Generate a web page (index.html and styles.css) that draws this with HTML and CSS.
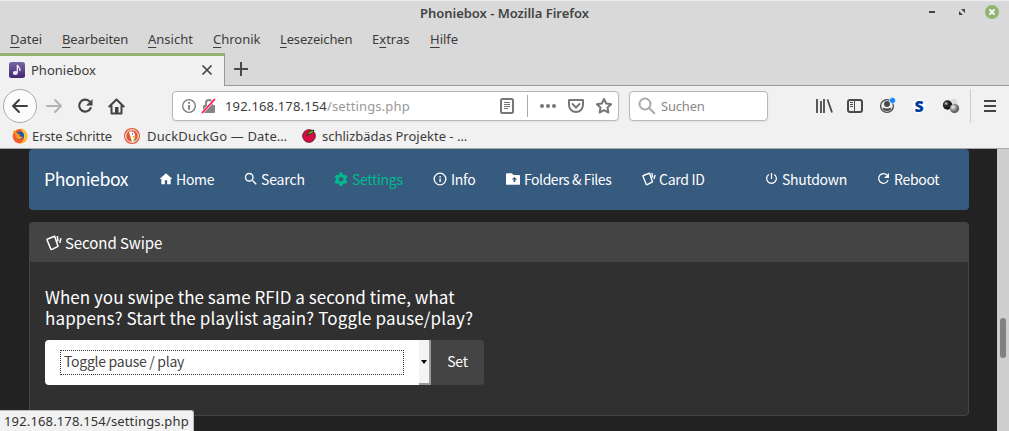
FILE: index.html
```html
<!DOCTYPE html>
<html lang="de">
<head>
<meta charset="utf-8">
<title>Phoniebox</title>
<link rel="stylesheet" href="styles.css">
</head>
<body>
<div class="window">
  <header class="titlebar">
    <span class="title">Phoniebox - Mozilla Firefox</span>
    <svg class="controls" width="82" height="26" viewBox="0 0 82 26">
      <path d="M2 12h6" stroke="#444" stroke-width="2"/>
      <path d="M34 9h4v4zM32 11v4h4z" fill="#444"/>
      <circle cx="65" cy="12" r="7" fill="#92b372"/>
      <path d="M62.4 9.4l5.2 5.2M67.600 9.4l-5.200 5.200" stroke="#fff" stroke-width="1.800"/>
    </svg>
  </header>
  <nav class="menubar">
    <span class="m-datei"><u>D</u>atei</span>
    <span class="m-bearbeiten"><u>B</u>earbeiten</span>
    <span class="m-ansicht"><u>A</u>nsicht</span>
    <span class="m-chronik"><u>C</u>hronik</span>
    <span class="m-lesezeichen"><u>L</u>esezeichen</span>
    <span class="m-extras">E<u>x</u>tras</span>
    <span class="m-hilfe"><u>H</u>ilfe</span>
  </nav>
  <div class="tabs">
    <div class="tab">
      <svg width="16" height="16" viewBox="0 0 16 16">
        <defs><linearGradient id="purple" x2="0" y2="1"><stop stop-color="#7966a4"/><stop offset="1" stop-color="#43256f"/></linearGradient></defs>
        <rect width="16" height="16" rx="2.500" fill="url(#purple)"/>
        <ellipse cx="6.300" cy="11" rx="2.500" ry="2" fill="#eee8fa"/>
        <path d="M8.300 11V3c.4 2 3.700 2.500 2.500 6" fill="none" stroke="#eee8fa" stroke-width="1.300"/>
      </svg>
      <span class="tab-title">Phoniebox</span>
      <svg class="tab-close" width="12" height="12" viewBox="0 0 12 12"><path d="M1.500 1.500l9 9M10.500 1.500l-9 9" stroke="#444" stroke-width="1.700"/></svg>
    </div>
    <div class="tab-rest"><svg width="14" height="14" viewBox="0 0 14 14"><path d="M7 0v14M0 7h14" stroke="#4a4a4a" stroke-width="2"/></svg></div>
  </div>
  <div class="toolbar">
    <div class="back"><svg width="18" height="16" viewBox="0 0 18 16" fill="none" stroke="#3f3f3f" stroke-width="2" stroke-linecap="round" stroke-linejoin="round"><path d="M16 8H2M8 2L2 8l6 6"/></svg></div>
    <svg class="forward" width="18" height="16" viewBox="0 0 18 16" fill="none" stroke="#b3b3b3" stroke-width="2" stroke-linecap="round" stroke-linejoin="round"><path d="M2 8h14M10 2l6 6-6 6"/></svg>
    <svg class="reload" width="16" height="16" viewBox="0 0 16 16"><path d="M12.300 3.200A6 6 0 1 0 13.700 10" fill="none" stroke="#444" stroke-width="2.100" stroke-linecap="round"/><path d="M15.500 1v6.500H9z" fill="#444"/></svg>
    <svg class="home" width="17" height="17" viewBox="0 0 17 17"><path d="M1.300 8.500L8.500 1.500l7.200 7M3.500 8v7.500h10V8" fill="none" stroke="#444" stroke-width="2" stroke-linejoin="round" stroke-linecap="round"/><path d="M7 9h3.500v6H7z" fill="#444"/></svg>
    <div class="urlbar">
      <svg width="14" height="14" viewBox="0 0 14 14"><circle cx="7" cy="7" r="6.300" fill="none" stroke="#777" stroke-width="1.300"/><path d="M7 6v4.800M7 3v1.800" stroke="#777" stroke-width="1.800"/></svg>
      <svg class="lock" width="16" height="16" viewBox="0 0 16 16"><path d="M5 8V5a3 3 0 0 1 6 0v3" fill="none" stroke="#858585" stroke-width="2"/><rect x="2" y="7" width="12" height="8" rx="1" fill="#858585"/><path d="M1 15L14 1" stroke="#fff" stroke-width="2.600"/><path d="M1 15L14 1" stroke="#ff174f" stroke-width="1.800"/></svg>
      <span class="url">192.168.178.154<i>/settings.php</i></span>
      <svg class="url-tools" width="116" height="22" viewBox="0 0 116 22" fill="none" stroke="#777">
        <rect x="2" y="4" width="12" height="14" rx="1.500" stroke-width="2"/><path d="M5 7.500h6M5 9.500h6M5 11.500h6M5 13.500h4"/>
        <path d="M28.500 0v22" stroke="#aaa"/>
        <g fill="#777" stroke="none"><circle cx="43" cy="11" r="2"/><circle cx="49" cy="11" r="2"/><circle cx="55" cy="11" r="2"/></g>
        <path d="M70 5h14v5a7 7 0 0 1-14 0z" stroke-width="2" stroke-linejoin="round"/><path d="M73.500 9l3.500 3.500L80.500 9" stroke-width="2" stroke-linecap="round"/>
        <path d="M105 4l2.200 4.500 4.900.7-3.600 3.400.9 4.900-4.400-2.400-4.400 2.400.9-4.900L97.900 9.200l4.900-.7z" stroke-width="2" stroke-linejoin="round"/>
      </svg>
    </div>
    <div class="search">
      <svg width="18" height="18" viewBox="0 0 18 18" fill="none" stroke="#aaa" stroke-width="2" stroke-linecap="round"><circle cx="7" cy="7" r="5.500"/><path d="M11.300 11.300l5 5"/></svg>
      <span>Suchen</span>
    </div>
    <svg class="actions" width="194" height="34" viewBox="0 0 194 34">
      <path d="M2 10v14M6 12v12M9 10v14M12.500 10.500l4.500 13" stroke="#4a4a4a" stroke-width="1.800" fill="none"/>
      <rect x="33" y="11" width="14" height="12" rx="2" fill="none" stroke="#4a4a4a" stroke-width="2"/><path d="M39.500 11v12M35 13.500h3M35 15.500h3M35 17.500h3" stroke="#4a4a4a"/>
      <circle cx="72" cy="17" r="6.400" fill="none" stroke="#4a4a4a" stroke-width="1.300"/><circle cx="72" cy="15" r="3" fill="#4a4a4a"/><path d="M67.500 18.500q4.500 2 9 0-.5 3.500-4.500 3.500t-4.500-3.500" fill="#4a4a4a"/><circle cx="77.500" cy="11.500" r="3" fill="#0a84ff" stroke="#f1f1f1" stroke-width=".7"/>
      <circle cx="104" cy="17" r="7" fill="#fff"/><text x="104" y="22.500" class="s-logo" text-anchor="middle">S</text>
      <defs><radialGradient id="black" cx=".35" cy=".35" r=".6"><stop stop-color="#ddd"/><stop offset=".35" stop-color="#333"/><stop offset="1" stop-color="#111"/></radialGradient><radialGradient id="grey" cx=".35" cy=".35"><stop stop-color="#eee"/><stop offset="1" stop-color="#666"/></radialGradient></defs>
      <circle cx="139" cy="13" r="3.500" fill="#ddd"/><circle cx="132.500" cy="16" r="4.700" fill="url(#black)"/><circle cx="139.500" cy="19.500" r="4.700" fill="url(#grey)"/>
      <path d="M155.500 0v34" stroke="#ccc"/>
      <path d="M169 12h12M169 17h12M169 22h12" stroke="#444" stroke-width="2"/>
    </svg>
  </div>
  <div class="bookmarks">
    <svg width="16" height="16" viewBox="0 0 16 16"><circle cx="8" cy="8.300" r="7.300" fill="#f65a29"/><path d="M9 0c4 1.500 6.800 5 6 9.500-1 4-4 6-7 6 4-3 5-6 3-9z" fill="#ffc328"/><path d="M1.500 3L4 4.500" stroke="#ff9b00" stroke-width="2"/><circle cx="8" cy="7.500" r="4" fill="#165bb0"/><path d="M3 5q5 0 5 3 2 2 3 0-1 4-5 3-3-1-3-6" fill="#ff9724"/></svg>
    <span class="b-erste">Erste Schritte</span>
    <svg width="16" height="16" viewBox="0 0 16 16"><circle cx="8" cy="8" r="8" fill="#de5833"/><circle cx="8" cy="8" r="6.300" fill="#de5833" stroke="#fff"/><path d="M5 4q4-2 6 2l-.5 3 .5 4-3 1z" fill="#fff"/><path d="M9 8l3.500.5L9 10z" fill="#fdb000"/><path d="M9 11l3 .5-2 2z" fill="#66bd47"/><circle cx="8.500" cy="6" r=".7" fill="#345"/></svg>
    <span class="b-duck">DuckDuckGo — Date…</span>
    <svg width="16" height="16" viewBox="0 0 16 16"><circle cx="8" cy="8" r="6.300" fill="#d90b43" stroke="#6a1830"/><path d="M6 8q0-5 7-6-1 5-6 4z" fill="#65ad25" stroke="#27330e" stroke-width=".8"/></svg>
    <span class="b-projekte">schlizbädas Projekte - …</span>
  </div>
  <main class="viewport">
    <div class="page">
      <nav class="navbar">
        <span class="brand">Phoniebox</span>
        <a class="n-home"><svg width="14" height="14" viewBox="0 0 24 24"><path d="M10 21v-7h4v7h6v-9h3L12 2 1 12h3v9z"/></svg>Home</a>
        <a class="n-search"><svg width="14" height="14" viewBox="0 0 24 24"><path class="line" d="M14.500 14.500L21 21"/><circle class="line" cx="9" cy="9" r="6.500"/></svg>Search</a>
        <a class="n-settings"><svg width="14" height="14" viewBox="0 0 24 24"><path fill-rule="evenodd" d="M9.500 1h5l.7 3.500 2 1.200 3.400-1.200 2.500 4.500-2.700 2.300v2.400L23 16l-2.500 4.500-3.400-1.200-2 1.200-.6 3.500h-5l-.7-3.500-2-1.200-3.400 1.200L1 16l2.600-2.300v-2.400L1 9l2.500-4.500 3.400 1.200 2-1.200zM12 8.500a4 4 0 1 0 0 8 4 4 0 0 0 0-8z"/></svg>Settings</a>
        <a class="n-info"><svg width="14" height="14" viewBox="0 0 24 24"><circle class="line" cx="12" cy="12" r="10"/><path d="M11 11h2.400v6H11zM11 7h2.400v2.400H11z"/></svg>Info</a>
        <a class="n-folders"><svg width="14" height="14" viewBox="0 0 24 24"><path fill-rule="evenodd" d="M2 2h8l3 3h9q2 0 2 2v13q0 2-2 2H2q-2 0-2-2V4q0-2 2-2zm11 15h3v-4h3l-4.500-4.500L10 13h3z"/></svg>Folders &amp; Files</a>
        <a class="n-card"><svg width="14" height="14" viewBox="0 0 24 24"><path class="line" d="M2.500 6L13 2l5 15-9 4.500q-1.500.5-2-1L1.500 7q-.2-.8 1-1zM17 1.500l1 8M22.500 5l-2 7"/></svg>Card ID</a>
        <a class="n-shutdown"><svg width="13" height="13" viewBox="0 0 24 24"><path class="line" d="M12 2v11M7 4.500a9 9 0 1 0 10 0"/></svg>Shutdown</a>
        <a class="n-reboot"><svg width="13" height="13" viewBox="0 0 24 24"><path class="line" d="M18.500 5.500A9 9 0 1 0 20.500 15"/><path d="M22 2v9h-9z"/></svg>Reboot</a>
      </nav>
      <section class="card">
        <h2 class="card-head"><svg width="16" height="16" viewBox="0 0 24 24"><path class="line" d="M2.500 6L13 2l5 15-9 4.500q-1.500.5-2-1L1.500 7q-.2-.8 1-1zM17 1.500l1 8M22.500 5l-2 7"/></svg>Second Swipe</h2>
        <div class="card-body">
          <h4 class="question"><span class="q-one">When you swipe the same RFID a second time, what</span><span class="q-two">happens? Start the playlist again? Toggle pause/play?</span></h4>
          <div class="input-group">
            <div class="select"><span class="value">Toggle pause / play</span><span class="drop"><svg width="6" height="4" viewBox="0 0 6 4"><path d="M0 0h6L3 4z"/></svg></span></div>
            <button class="set">Set</button>
          </div>
        </div>
      </section>
    </div>
    <div class="scrollbar"><div class="thumb"></div></div>
  </main>
  <div class="status"><span>192.168.178.154/settings.php</span></div>
</div>
</body>
</html>
```
FILE: styles.css
```css
* { box-sizing: border-box; }
body { margin: 0; }
svg { display: block; flex: none; }
.window {
  position: relative; width: 1009px; height: 431px; overflow: hidden;
  background: #d9d9d9; color: #3c3c3c;
  font: 13px/18px "Noto Sans", sans-serif; white-space: nowrap;
}
.titlebar { height: 26px; display: flex; justify-content: flex-end; border-top: 1px solid #eee; }
.title { width: 507px; font-weight: 600; line-height: 25px; letter-spacing: -.03px; color: #444; }
.controls { margin-top: -1px; }
.menubar { height: 27px; display: flex; padding-left: 10px; line-height: 27px; }
.menubar u { text-underline-offset: 3px; }
.m-datei { width: 52px; }
.m-bearbeiten { width: 86px; letter-spacing: -.1px; }
.m-ansicht { width: 65px; }
.m-chronik { width: 67px; }
.m-lesezeichen { width: 92px; letter-spacing: -.15px; }
.m-extras { width: 58px; }
.tabs { display: flex; height: 33px; }
.tab {
  width: 225px; display: flex; align-items: center; padding: 0 11px 2px 9px;
  background: #f1f1f1; border-top: 3px solid #92b372; border-right: 1px solid #999;
}
.tab-title { margin-left: 6px; }
.tab-close { margin-left: auto; }
.tab-rest { flex: 1; padding: 9px; border-bottom: 1px solid #999; }
.toolbar { height: 40px; display: flex; align-items: center; background: #f1f1f1; padding-left: 3px; }
.back {
  width: 34px; height: 34px; border: 1px solid #aaa; border-radius: 50%; background: #fcfcfc;
  display: flex; align-items: center; justify-content: center;
}
.forward { margin-left: 8px; }
.reload { margin-left: 14px; }
.home { margin-left: 15px; }
.urlbar, .search {
  height: 30px; border: 1px solid #b8b8b8; border-radius: 4px; background: #fff;
  display: flex; align-items: center; box-shadow: 0 1px 2px #0001;
}
.urlbar { width: 447px; margin-left: 47px; padding-left: 9px; }
.lock { margin-left: 5px; }
.url { margin-left: 8px; width: 274px; letter-spacing: .15px; }
.url i { font-style: normal; color: #999; }
.search { width: 139px; margin-left: 10px; padding-left: 8px; color: #888; }
.search span { margin-left: 5px; letter-spacing: -.2px; }
.actions { margin-left: 47px; }
.s-logo { font: 800 16px "Open Sans", sans-serif; fill: #003b9b; }
.bookmarks { height: 23px; display: flex; align-items: center; background: #f1f1f1; padding: 0 0 3px 12px; border-bottom: 1px solid #aaa; }
.b-erste { margin-left: 4px; width: 92px; letter-spacing: -.07px; }
.b-duck { margin-left: 7px; width: 154px; letter-spacing: .15px; }
.b-projekte { margin-left: 5px; }
.viewport { height: 282px; display: flex; background: #222; color: #fff; font-family: "Noto Sans CJK SC", sans-serif; }
.page { width: 997px; padding: 0 28px 0 29px; }
.navbar { height: 61px; background: #375a7f; border-radius: 4px; padding: 0 0 2px 15px; display: flex; align-items: center; font-size: 14px; letter-spacing: -.3px; }
.brand { width: 115px; font-size: 17.700px; line-height: 24px; padding-bottom: 2px; letter-spacing: -.45px; }
.navbar a { display: flex; align-items: center; gap: 3px; }
.navbar svg, .card-head svg { fill: currentColor; }
.line { fill: none; stroke: currentColor; stroke-width: 2.300; stroke-linejoin: round; }
.n-home { width: 85px; }
.n-search { width: 90px; letter-spacing: -.15px; }
.navbar .n-settings { width: 99px; color: #00bc8c; gap: 4px; }
.n-info { width: 73px; }
.navbar .n-info, .navbar .n-folders { gap: 4px; }
.n-folders { width: 136px; letter-spacing: -.45px; }
.n-card { width: 123px; }
.navbar .n-shutdown, .navbar .n-reboot { gap: 4px; }
.n-shutdown { width: 112px; }
.card { margin-top: 12px; height: 194px; background: #303030; border: 1px solid #444; border-radius: 4px; }
.card-head { margin: 0; height: 39px; padding-left: 16px; display: flex; align-items: center; gap: 3px; background: #444; font-size: 15px; font-weight: 400; letter-spacing: -.08px; }
.card-body { padding: 24px 15px; }
.question { margin: 0; font-size: 17px; line-height: 21px; font-weight: 400; }
.question span { display: block; height: 21px; }
.q-one { letter-spacing: .04px; }
.q-two { letter-spacing: .13px; }
.input-group { display: flex; margin-top: 12px; height: 45px; }
.select { width: 386px; display: flex; align-items: center; justify-content: space-between; background: #fff; border-radius: 4px 0 0 4px; padding-left: 15px; color: #444; font-size: 14px; }
.value { width: 344px; height: 25px; line-height: 21px; padding-left: 3px; border: 1px dotted #333; letter-spacing: -.27px; }
.drop { width: 12px; height: 45px; background: #f4f3f2; border-right: 2px solid #9b9b9b; border-bottom: 2px solid #9b9b9b; display: flex; align-items: center; justify-content: center; fill: #000; }
.set { width: 53px; border: 0; padding: 0 0 3px; border-radius: 0 4px 4px 0; background: #444; color: #fff; font: 14px "Noto Sans CJK SC", sans-serif; letter-spacing: -.3px; }
.scrollbar { width: 12px; background: #cecece; padding: 169px 3px 0; }
.thumb { height: 40px; width: 6px; border-radius: 3px; background: #7e8282; }
.status { position: absolute; left: 0; bottom: 0; width: 194px; height: 21px; padding-left: 4px; line-height: 20px; letter-spacing: .15px; background: #f1f1f1; border: 1px solid #bbb; border-width: 1px 1px 0 0; border-radius: 0 3px 0 0; color: #333; }
```
